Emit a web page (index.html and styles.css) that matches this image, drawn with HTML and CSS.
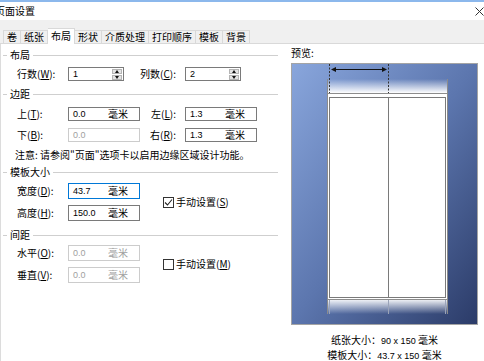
FILE: index.html
```html
<!DOCTYPE html>
<html lang="zh-CN">
<head>
  <meta charset="UTF-8">
  <title>页面设置</title>
  <link rel="stylesheet" href="styles.css">
</head>
<body>
  <div class="dialog">
    <div class="titlebar">
      <span class="title">页面设置</span>
      <svg class="close" width="9" height="9" viewBox="0 0 9 9">
        <path d="M0.5 0.5L8.5 8.5M8.5 0.5L0.5 8.5" stroke="#333" stroke-width="1"/>
      </svg>
    </div>

    <div class="tabstrip">
      <div class="tab first">卷</div>
      <div class="tab">纸张</div>
      <div class="tab active">布局</div>
      <div class="tab">形状</div>
      <div class="tab">介质处理</div>
      <div class="tab">打印顺序</div>
      <div class="tab">模板</div>
      <div class="tab">背景</div>
    </div>

    <div class="pane">
      <div class="settings">
        <div class="group-head">布局</div>
        <div class="rows rows-layout">
          <label class="lbl">行数(<u>W</u>):</label>
          <div class="field spin">
            <span class="num">1</span>
            <span class="spinner"><span class="up"></span><span class="down"></span></span>
          </div>
          <label class="lbl right">列数(<u>C</u>):</label>
          <div class="field spin">
            <span class="num">2</span>
            <span class="spinner"><span class="up"></span><span class="down"></span></span>
          </div>
        </div>

        <div class="group-head">边距</div>
        <div class="rows rows-margin">
          <label class="lbl">上(<u>T</u>):</label>
          <div class="field"><span class="num">0.0</span><span class="unit">毫米</span></div>
          <label class="lbl right">左(<u>L</u>):</label>
          <div class="field"><span class="num">1.3</span><span class="unit">毫米</span></div>

          <label class="lbl">下(<u>B</u>):</label>
          <div class="field disabled"><span class="num">0.0</span></div>
          <label class="lbl right">右(<u>R</u>):</label>
          <div class="field"><span class="num">1.3</span><span class="unit">毫米</span></div>
        </div>

        <p class="note">注意: 请参阅"页面"选项卡以启用边缘区域设计功能。</p>

        <div class="group-head">模板大小</div>
        <div class="rows rows-size">
          <label class="lbl">宽度(<u>D</u>):</label>
          <div class="field focused"><span class="num">43.7</span><span class="unit">毫米</span></div>
          <div class="check">
            <span class="box checked">
              <svg width="9" height="9" viewBox="0 0 9 9"><path d="M1 4.5L3.5 7L8 1.5" fill="none" stroke="#222" stroke-width="1.1"/></svg>
            </span>
            <span>手动设置(<u>S</u>)</span>
          </div>
          <label class="lbl">高度(<u>H</u>):</label>
          <div class="field"><span class="num">150.0</span><span class="unit">毫米</span></div>
        </div>

        <div class="group-head">间距</div>
        <div class="rows rows-size rows-gap">
          <label class="lbl">水平(<u>O</u>):</label>
          <div class="field disabled"><span class="num">0.0</span><span class="unit">毫米</span></div>
          <div class="check">
            <span class="box"></span>
            <span>手动设置(<u>M</u>)</span>
          </div>
          <label class="lbl">垂直(<u>V</u>):</label>
          <div class="field disabled"><span class="num">0.0</span><span class="unit">毫米</span></div>
        </div>
      </div>

      <div class="preview">
        <div class="preview-label">预览:</div>
        <svg class="preview-art" width="187" height="262" viewBox="0 0 187 262">
          <defs>
            <linearGradient id="bg" x1="0" y1="0" x2="1" y2="1">
              <stop offset="0" stop-color="#89a6dc"/>
              <stop offset="0.5" stop-color="#5c76ae"/>
              <stop offset="1" stop-color="#2b3b68"/>
            </linearGradient>
            <linearGradient id="fadeDown" x1="0" y1="0" x2="0" y2="1">
              <stop offset="0" stop-color="#ffffff" stop-opacity="0"/>
              <stop offset="1" stop-color="#ffffff" stop-opacity="1"/>
            </linearGradient>
            <linearGradient id="fadeUp" x1="0" y1="0" x2="0" y2="1">
              <stop offset="0" stop-color="#ffffff" stop-opacity="0.9"/>
              <stop offset="1" stop-color="#ffffff" stop-opacity="0"/>
            </linearGradient>
          </defs>
          <rect x="0.5" y="0.5" width="186" height="261" fill="url(#bg)" stroke="#a4a4a4"/>

          <!-- sheet -->
          <rect x="36" y="16" width="121" height="14" fill="url(#fadeDown)"/>
          <rect x="36" y="31" width="121" height="205" fill="#ffffff"/>
          <rect x="36" y="237" width="121" height="14" fill="url(#fadeUp)"/>
          <path d="M36.5 16V251M156.5 16V251" stroke="#8c8c8c"/>
          <path d="M37 30.5H156M37 236.5H156" stroke="#8c8c8c"/>

          <!-- labels -->
          <rect x="38.5" y="34.5" width="59" height="200" fill="#fff" stroke="#7a7a7a"/>
          <rect x="97.5" y="34.5" width="57" height="200" fill="#fff" stroke="#7a7a7a"/>
          <path d="M38.5 237V251M97.5 237V251M154.5 237V251" stroke="#9aa3b8"/>

          <!-- width marker -->
          <path d="M38.5 1V30M97.5 1V30" stroke="#333" stroke-dasharray="2 1.5"/>
          <path d="M44 6.5H92" stroke="#111"/>
          <polygon points="40,6.5 45,4 45,9" fill="#111"/>
          <polygon points="96,6.5 91,4 91,9" fill="#111"/>
        </svg>
        <div class="preview-info">
          <div>纸张大小：<span class="num">90 x 150</span> 毫米</div>
          <div>模板大小：<span class="num">43.7 x 150</span> 毫米</div>
        </div>
      </div>
    </div>
  </div>
</body>
</html>
```

FILE: styles.css
```css
* {
  box-sizing: border-box;
}

html, body {
  margin: 0;
  padding: 0;
}

body {
  width: 484px;
  height: 361px;
  overflow: hidden;
  background: #fff;
  color: #000;
  font-family: "Noto Sans CJK SC", "Noto Sans", sans-serif;
  font-size: 10px;
  line-height: 12px;
}

u {
  text-decoration: underline;
  text-underline-offset: 1px;
}

/* title bar */
.titlebar {
  height: 20px;
  border-top: 2px solid #8cb8ec;
  display: flex;
  align-items: center;
  justify-content: space-between;
}

.title {
  margin-left: -5px;
}

.close {
  margin-right: 0;
  margin-top: 1px;
}

/* tabs */
.tabstrip {
  height: 24px;
  background: #f0f0f0;
  border-bottom: 1px solid #d9d9d9;
  display: flex;
  align-items: flex-end;
  padding-left: 3px;
}

.tab {
  height: 13px;
  line-height: 12px;
  padding: 0 3px;
  border: 1px solid #d9d9d9;
  border-left: none;
  border-bottom: none;
  background: #f0f0f0;
}

.tab.first {
  border-left: 1px solid #d9d9d9;
}

.tab.active {
  height: 16px;
  line-height: 14px;
  margin-bottom: -1px;
  background: #fff;
}

/* main pane */
.pane {
  display: grid;
  grid-template-columns: 277px 1fr;
  height: 317px;
  border-left: 1px solid #dcdcdc;
}

.settings {
  padding: 5px 0 0 2px;
}

.group-head {
  display: flex;
  align-items: center;
  height: 12px;
}

.group-head::before,
.group-head::after {
  content: "";
  border-top: 1px solid #cfcfcf;
}

.group-head::before {
  width: 4px;
  margin-right: 3px;
}

.group-head::after {
  flex: 1;
  margin-left: 3px;
}

.rows {
  display: grid;
  grid-template-columns: 51px 72px 45px 72px;
  grid-auto-rows: 14px;
  row-gap: 7px;
  align-items: center;
  padding-left: 14px;
}

.rows-layout {
  margin: 6px 0 7px;
}

.rows-margin {
  margin: 7px 0 7px;
}

.rows-size {
  grid-auto-rows: 16px;
  row-gap: 6px;
  margin: 5px 0 8px;
}

.rows-gap {
  margin: 4px 0 0;
}

.lbl {
  white-space: nowrap;
}

.lbl.right {
  text-align: right;
  padding-right: 9px;
}

.field {
  height: 100%;
  border: 1px solid #7a7a7a;
  display: flex;
  align-items: center;
  padding-left: 4px;
  background: #fff;
}

.field .num {
  width: 35px;
  font-family: "Liberation Sans", Arial, sans-serif;
  font-size: 9px;
}

.field.spin {
  width: 56px;
  padding-right: 1px;
}

.field.focused {
  border-color: #0078d7;
}

.field.disabled {
  border-color: #cccccc;
  color: #a0a0a0;
}

.spinner {
  margin-left: auto;
  display: flex;
  flex-direction: column;
  gap: 1px;
}

.spinner span {
  width: 10px;
  height: 5px;
  background: #e4e4e4;
  border: 1px solid #b4b4b4;
  display: flex;
  align-items: center;
  justify-content: center;
}

.spinner .up::after,
.spinner .down::after {
  content: "";
  border-left: 2.5px solid transparent;
  border-right: 2.5px solid transparent;
}

.spinner .up::after {
  border-bottom: 3px solid #111;
}

.spinner .down::after {
  border-top: 3px solid #111;
}

.note {
  margin: 0 0 5px 12px;
  height: 12px;
  white-space: nowrap;
}

.check {
  grid-column: 3 / span 2;
  grid-row: 1 / span 2;
  display: flex;
  align-items: center;
  padding-left: 23px;
}

.box {
  width: 11px;
  height: 11px;
  border: 1px solid #333;
  margin-right: 2px;
  display: flex;
  align-items: center;
  justify-content: center;
}

/* preview */
.preview {
  padding: 3px 0 0 13px;
}

.preview-label {
  height: 12px;
  margin-bottom: 4px;
}

.preview-art {
  display: block;
}

.preview-info {
  width: 187px;
  margin-top: 8px;
  text-align: center;
  line-height: 14px;
}

.preview-info .num {
  font-family: "Liberation Sans", Arial, sans-serif;
  font-size: 9px;
}
```
